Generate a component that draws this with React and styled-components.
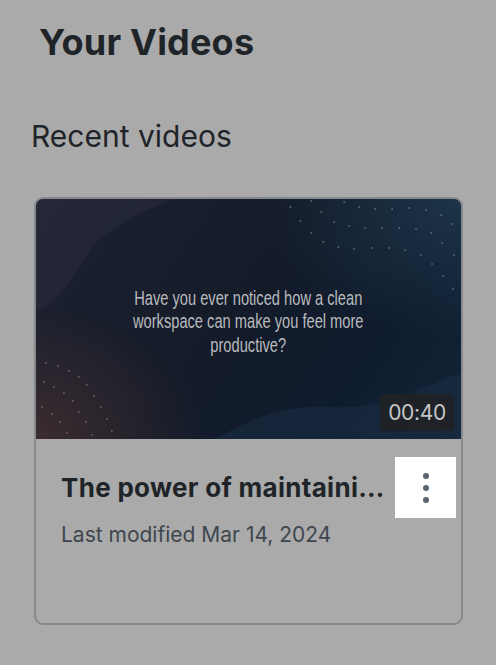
import React from "react";
import styled, { createGlobalStyle } from "styled-components";

const GlobalStyle = createGlobalStyle`
  html, body {
    margin: 0;
    padding: 0;
    background: #aaaaaa;
  }
  body {
    font-family: Inter, "Noto Sans", sans-serif;
    -webkit-font-smoothing: antialiased;
  }
`;

const Page = styled.div`
  width: 496px;
  height: 665px;
  box-sizing: border-box;
  padding: 20px 33px 0 31px;
  background: #aaaaaa;
  overflow: hidden;
`;

const Heading = styled.h1`
  margin: 0 0 0 8px;
  font-size: 36px;
  line-height: 44px;
  font-weight: 700;
  color: #1f2429;
  letter-spacing: 0.2px;
`;

const Section = styled.h2`
  margin: 54px 0 0;
  font-size: 30px;
  line-height: 36px;
  font-weight: 400;
  color: #1f2429;
`;

const Card = styled.div`
  margin: 43px 0 0 3px;
  width: 429px;
  height: 428px;
  box-sizing: border-box;
  border: 2px solid #85898e;
  border-radius: 9px;
  overflow: hidden;
  display: flex;
  flex-direction: column;
`;

const Thumb = styled.div`
  position: relative;
  height: 240px;
  flex-shrink: 0;
  display: flex;
  align-items: center;
  justify-content: center;
  background:
    radial-gradient(ellipse 170px 130px at 0% 100%, rgba(88, 56, 50, 0.55), transparent 100%),
    radial-gradient(ellipse 200px 140px at 100% 0%, rgba(40, 72, 95, 0.55), transparent 100%),
    linear-gradient(125deg, #1f2230 0%, #141b29 45%, #0f1c2e 75%, #122539 100%);
`;

const Deco = styled.svg`
  position: absolute;
  inset: 0;
  width: 100%;
  height: 100%;
`;

const Quote = styled.p`
  position: relative;
  margin: 0;
  white-space: nowrap;
  text-align: center;
  font-family: "Liberation Sans", Arial, sans-serif;
  font-size: 20.5px;
  line-height: 23.5px;
  color: #b9babd;
  transform: translateY(2px) scaleX(0.715);
`;

const Badge = styled.span`
  position: absolute;
  right: 7px;
  bottom: 8px;
  padding: 0 8px;
  height: 37px;
  display: flex;
  align-items: center;
  border-radius: 4px;
  background: #1e2227;
  color: #c4c6c8;
  font-size: 21px;
  letter-spacing: -0.3px;
`;

const Body = styled.div`
  padding: 18px 5px 0 25px;
`;

const TitleRow = styled.div`
  display: flex;
  align-items: center;
  gap: 6px;
`;

const Title = styled.div`
  flex: 1;
  min-width: 0;
  font-size: 26px;
  font-weight: 700;
  color: #1f2429;
  white-space: nowrap;
  overflow: hidden;
  text-overflow: ellipsis;
  letter-spacing: 0.3px;
`;

const MenuButton = styled.button`
  width: 61px;
  height: 61px;
  flex-shrink: 0;
  border: none;
  background: #ffffff;
  display: flex;
  align-items: center;
  justify-content: center;
  padding: 0;
  cursor: pointer;
`;

const Meta = styled.div`
  margin-top: 4px;
  font-size: 21px;
  color: #3e464e;
`;

const topDots = [
  [255, 8], [276, 2], [286, 13], [309, 3], [324, 8], [340, 10], [357, 10], [374, 9], [391, 11], [406, 16],
  [265, 22], [299, 23], [314, 27], [330, 29], [347, 29], [364, 29], [381, 30], [396, 34], [417, 25],
  [276, 34], [288, 43], [303, 48], [319, 50], [337, 49], [354, 49], [370, 51], [386, 56], [407, 44],
  [419, 56], [397, 65], [408, 77], [418, 90],
];

const bottomDots = [
  [10, 164], [22, 167], [33, 172], [43, 178], [8, 183], [18, 188], [28, 194], [37, 202], [51, 186],
  [58, 197], [65, 208], [6, 208], [16, 215], [43, 213], [24, 223], [50, 223], [71, 220], [31, 234],
  [56, 236], [76, 232],
];

function Thumbnail() {
  return (
    <Thumb>
      <Deco viewBox="0 0 426 240" preserveAspectRatio="none">
        <path d="M0,0 L140,0 C110,10 80,25 62,42 C40,66 30,100 0,112 Z" fill="#2a2e3c" opacity="0.5" />
        <path d="M180,240 C220,216 258,205 298,208 C350,211 390,186 426,174 L426,240 Z" fill="#1b2d44" opacity="0.55" />
        {topDots.map(([x, y], i) => (
          <circle key={"t" + i} cx={x} cy={y} r="1" fill="#55636f" />
        ))}
        {bottomDots.map(([x, y], i) => (
          <circle key={"b" + i} cx={x} cy={y} r="1" fill="#705850" />
        ))}
      </Deco>
      <Quote>
        Have you ever noticed how a clean
        <br />
        workspace can make you feel more
        <br />
        productive?
      </Quote>
      <Badge>00:40</Badge>
    </Thumb>
  );
}

function KebabIcon() {
  return (
    <svg width="8" height="30" viewBox="0 0 8 30">
      <circle cx="4" cy="3" r="3" fill="#5b6570" />
      <circle cx="4" cy="15" r="3" fill="#5b6570" />
      <circle cx="4" cy="27" r="3" fill="#5b6570" />
    </svg>
  );
}

export default function App() {
  return (
    <>
      <GlobalStyle />
      <Page>
        <Heading>Your Videos</Heading>
        <Section>Recent videos</Section>
        <Card>
          <Thumbnail />
          <Body>
            <TitleRow>
              <Title>The power of maintaining a clean workspace</Title>
              <MenuButton aria-label="More options">
                <KebabIcon />
              </MenuButton>
            </TitleRow>
            <Meta>Last modified Mar 14, 2024</Meta>
          </Body>
        </Card>
      </Page>
    </>
  );
}
